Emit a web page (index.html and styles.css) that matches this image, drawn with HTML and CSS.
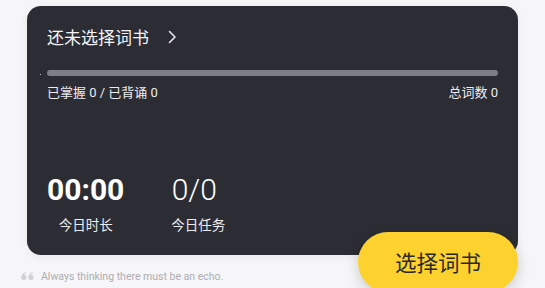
FILE: index.html
```html
<!DOCTYPE html>
<html lang="zh">
<head>
<meta charset="utf-8">
<link rel="stylesheet" href="styles.css">
</head>
<body>
<div class="page">
  <div class="card">
    <div class="title-row">
      <span class="title">还未选择词书</span>
      <svg class="chev" width="9" height="14" viewBox="0 0 9 14"><path d="M1.5 1.5 L7 7 L1.5 12.5" fill="none" stroke="#e6e6ea" stroke-width="1.6" stroke-linecap="round" stroke-linejoin="round"/></svg>
    </div>
    <div class="bar-wrap">
      <span class="dot"></span>
      <div class="bar"></div>
    </div>
    <div class="stats">
      <span>已掌握 0 / 已背诵 0</span>
      <span>总词数 0</span>
    </div>
    <div class="today">
      <div class="item">
        <div class="num bold">00:00</div>
        <div class="label">今日时长</div>
      </div>
      <div class="item">
        <div class="num shift">0/0</div>
        <div class="label">今日任务</div>
      </div>
    </div>
  </div>
  <div class="quote">
    <svg class="qmark" width="13" height="8" viewBox="0 0 13 8"><path d="M2.8 8 A2.7 2.7 0 1 1 5.4 4.8 L5.4 5.2 A2.7 2.7 0 0 1 2.8 8 Z M0.4 5.6 C0.4 2.6 2.2 0.6 4.6 0 L4.9 0.8 C3.2 1.5 2.2 2.8 2.0 4.4 Z" fill="#d2d2d6"/><path d="M9.8 8 A2.7 2.7 0 1 1 12.4 4.8 L12.4 5.2 A2.7 2.7 0 0 1 9.8 8 Z M7.4 5.6 C7.4 2.6 9.2 0.6 11.6 0 L11.9 0.8 C10.2 1.5 9.2 2.8 9.0 4.4 Z" fill="#d2d2d6"/></svg>
    <span class="qtext">Always thinking there must be an echo.</span>
  </div>
  <button class="choose">选择词书</button>
</div>
</body>
</html>
```

FILE: styles.css
```css
html, body {
  margin: 0;
  padding: 0;
  background: #f6f6f8;
  width: 545px;
  height: 288px;
  overflow: hidden;
  font-family: Roboto, "Noto Sans CJK SC", sans-serif;
}
.page {
  position: relative;
  padding: 6px 27px 0 27px;
  height: 282px;
}
.card {
  box-sizing: border-box;
  width: 491px;
  height: 249px;
  background: #2c2d34;
  border-radius: 14px;
  padding: 19px 20px 0 20px;
  color: #f2f2f4;
  box-shadow: 0 2px 10px rgba(0,0,0,0.06);
}
.title-row {
  display: flex;
  align-items: center;
  height: 24px;
  gap: 19px;
}
.title {
  font-family: "Noto Sans CJK SC", sans-serif;
  font-size: 17px;
  line-height: 24px;
  color: #f4f4f6;
}
.chev {
  display: block;
}
.bar-wrap {
  position: relative;
  margin-top: 21px;
}
.dot {
  position: absolute;
  left: -7px;
  top: 4px;
  width: 1px;
  height: 1px;
  background: #bbbbc0;
}
.bar {
  height: 6px;
  border-radius: 3px;
  background: #7e7e86;
}
.stats {
  display: flex;
  justify-content: space-between;
  margin-top: 9px;
  font-size: 13px;
  line-height: 16px;
  color: #ececef;
}
.today {
  display: flex;
  margin-top: 71px;
  gap: 47px;
}
.item {
  display: flex;
  flex-direction: column;
  align-items: center;
}
.num {
  font-size: 30px;
  line-height: 36px;
  color: #ffffff;
  font-weight: 300;
}
.num.bold {
  font-weight: 700;
}
.num.shift {
  margin-right: 8px;
}
.label {
  margin-top: 7px;
  font-family: "Noto Sans CJK SC", sans-serif;
  font-size: 13.5px;
  line-height: 18px;
  color: #ececef;
}
.quote {
  display: flex;
  align-items: center;
  gap: 7px;
  margin-top: 15px;
  margin-left: -6px;
}
.qmark {
  display: block;
  margin-top: -2px;
}
.qtext {
  font-size: 10.5px;
  line-height: 14px;
  color: #adadb2;
}
.choose {
  position: absolute;
  left: 358px;
  top: 232px;
  width: 160px;
  height: 60px;
  border: none;
  border-radius: 30px;
  background: #fdd22e;
  color: #2a2a2a;
  font-family: "Noto Sans CJK SC", sans-serif;
  font-size: 21.5px;
  line-height: 60px;
  padding: 0;
  text-align: center;
  box-shadow: 0 4px 14px rgba(0,0,0,0.18);
}
```
